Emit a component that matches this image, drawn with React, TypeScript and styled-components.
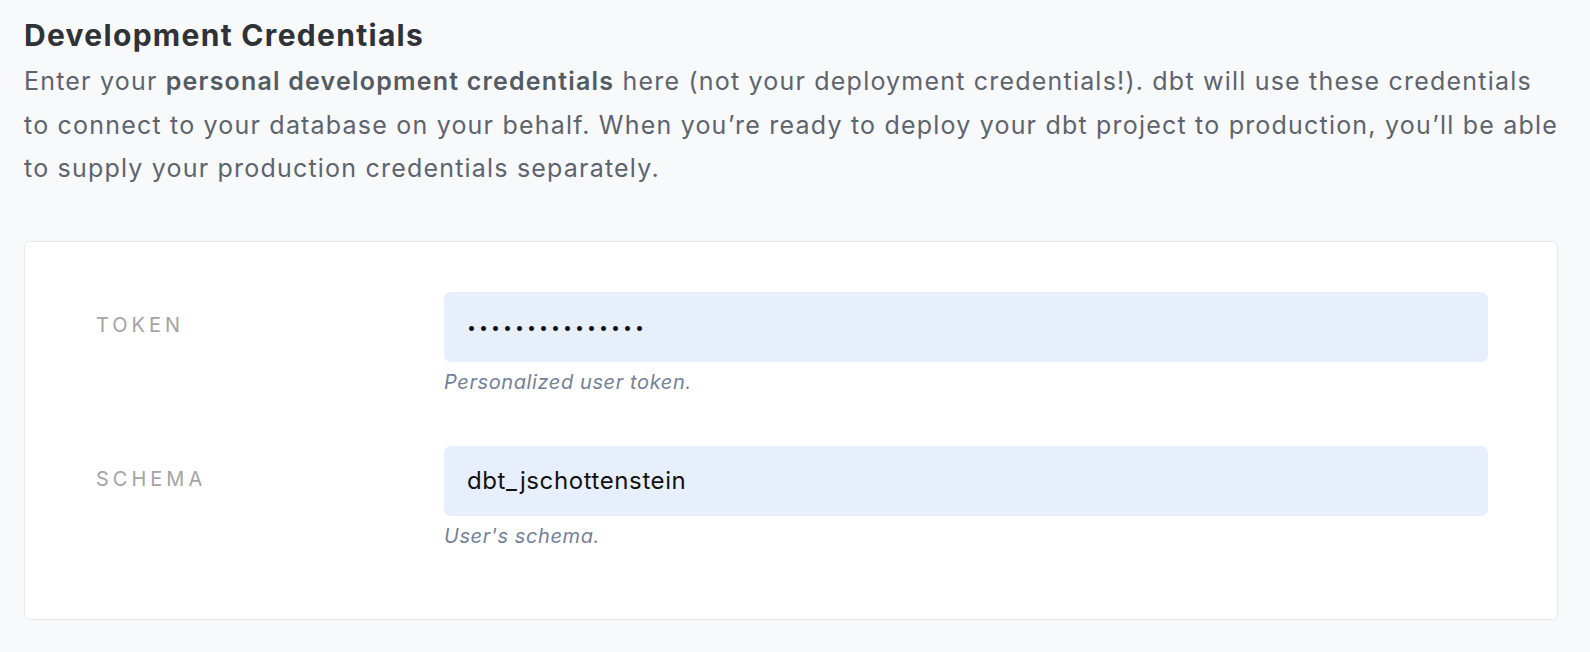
import styled, { createGlobalStyle } from 'styled-components';

const GlobalStyle = createGlobalStyle`
  html,
  body {
    margin: 0;
    padding: 0;
    background-color: #f8f9fb;
  }

  * {
    box-sizing: border-box;
  }
`;

const Page = styled.main`
  min-height: 652px;
  padding: 15px 32px 0 24px;

  font-family: Inter, 'Noto Sans', sans-serif;
  background-color: #f8f9fb;
`;

const Title = styled.h2`
  margin: 0;

  color: #2f3237;
  font-size: 30px;
  font-weight: 700;
  line-height: 40px;
  letter-spacing: 1.3px;
`;

const Intro = styled.p`
  margin: 5px 0 0;

  color: #5d646d;
  font-size: 25px;
  font-weight: 400;
  line-height: 43.5px;
  letter-spacing: 1.2px;

  strong {
    color: #545b64;
    font-weight: 600;
  }
`;

const Card = styled.section`
  margin-top: 50px;
  padding: 50px 69px 69px 71px;

  display: flex;
  flex-direction: column;
  gap: 50px;

  background-color: #ffffff;
  border: 1px solid #e6e9ee;
  border-radius: 6px;
`;

const Field = styled.div`
  display: grid;
  grid-template-columns: 348px 1fr;
`;

const Label = styled.label`
  height: 70px;
  padding-bottom: 4px;

  display: flex;
  align-items: center;

  color: #a4a4a4;
  font-size: 20px;
  font-weight: 400;
  letter-spacing: 4px;
  text-transform: uppercase;
`;

const Control = styled.div`
  display: flex;
  flex-direction: column;
  gap: 6px;
`;

const Input = styled.input<{ $secret?: boolean }>`
  width: 100%;
  height: 70px;
  padding: 0 23px;

  color: #121212;
  font-family: Inter, 'Noto Sans', sans-serif;
  font-size: ${(props) => (props.$secret ? '16px' : '24px')};
  letter-spacing: ${(props) => (props.$secret ? '3px' : '0.6px')};

  background-color: #e8effc;
  border: none;
  border-radius: 7px;
  outline: none;
`;

const Help = styled.span`
  color: #748198;
  font-size: 20px;
  font-style: italic;
  line-height: 28px;
  letter-spacing: 0.6px;
`;

const fields = [
  {
    id: 'token',
    label: 'Token',
    type: 'password',
    value: '•••••••••••••••',
    help: 'Personalized user token.',
  },
  {
    id: 'schema',
    label: 'Schema',
    type: 'text',
    value: 'dbt_jschottenstein',
    help: "User's schema.",
  },
];

export default function App() {
  return (
    <>
      <GlobalStyle />
      <Page>
        <Title>Development Credentials</Title>
        <Intro>
          Enter your <strong>personal development credentials</strong> here
          (not your deployment credentials!). dbt will use these credentials to
          connect to your database on your behalf. When you’re ready to deploy
          your dbt project to production, you’ll be able to supply your
          production credentials separately.
        </Intro>
        <Card>
          {fields.map((field) => (
            <Field key={field.id}>
              <Label htmlFor={field.id}>{field.label}</Label>
              <Control>
                <Input
                  id={field.id}
                  type={field.type}
                  defaultValue={field.value}
                  $secret={field.type === 'password'}
                />
                <Help>{field.help}</Help>
              </Control>
            </Field>
          ))}
        </Card>
      </Page>
    </>
  );
}
